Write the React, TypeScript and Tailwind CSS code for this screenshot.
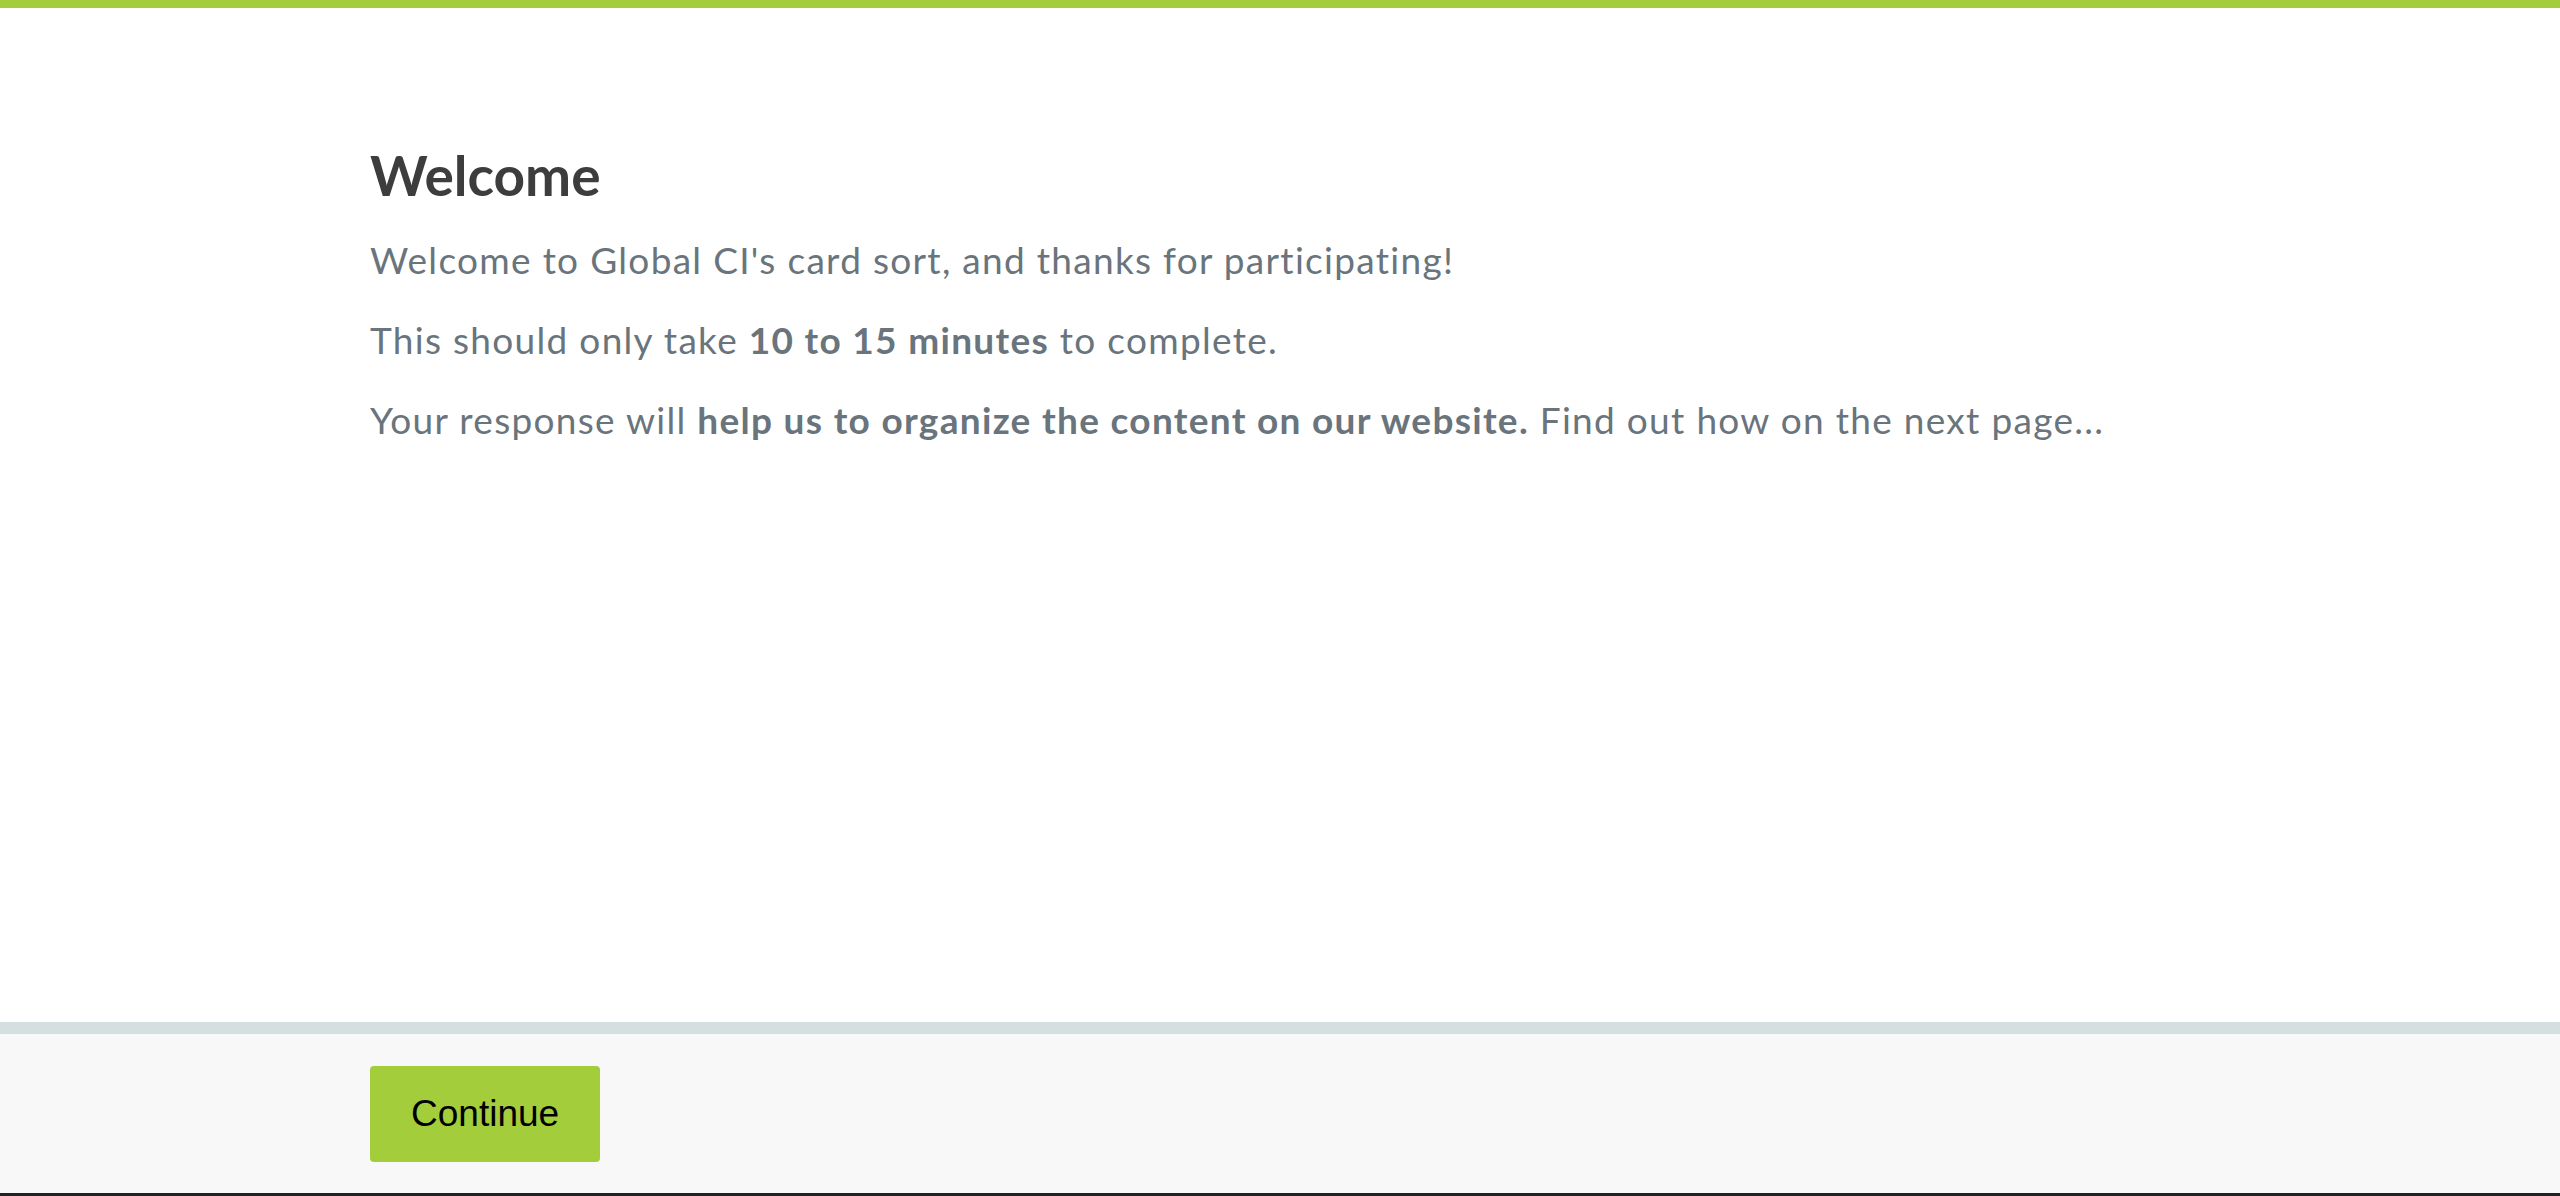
export default function App() {
  return (
    <div className="flex h-[1196px] flex-col bg-white font-['Lato',sans-serif]">
      <div className="h-2 bg-[#a3cd3a]" />

      <main className="flex-1">
        <div className="mx-auto w-[1820px] pt-[133px]">
          <h1 className="text-[55px] font-bold leading-[68px] text-[#3d3d3d]">Welcome</h1>
          <div className="mt-[27px] space-y-8 text-[37px] leading-[48px] tracking-[1.3px] text-[#69747c]">
            <p>Welcome to Global CI's card sort, and thanks for participating!</p>
            <p>
              This should only take <strong className="font-bold">10 to 15 minutes</strong> to complete.
            </p>
            <p>
              Your response will <strong className="font-bold">help us to organize the content on our website.</strong> Find out how on the next page...
            </p>
          </div>
        </div>
      </main>

      <footer className="h-[174px] border-t-[12px] border-b-[3px] border-[#d5dee1] border-b-[#222] bg-[#f8f8f8]">
        <div className="mx-auto w-[1820px] pt-8">
          <button className="h-[96px] rounded-[4px] bg-[#a3cd3a] px-[41px] font-['Liberation_Sans',sans-serif] text-[37px] text-black">
            Continue
          </button>
        </div>
      </footer>
    </div>
  );
}
